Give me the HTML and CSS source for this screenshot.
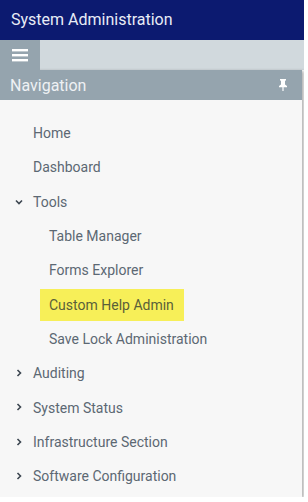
FILE: index.html
```html
<!DOCTYPE html>
<html lang="en">
<head>
  <meta charset="UTF-8" />
  <title>System Administration</title>
  <link rel="stylesheet" href="styles.css">
</head>
<body>

  <div class="topbar">System Administration</div>

  <div class="toolbar">
    <div class="menu-btn">
      <svg width="16" height="14" viewBox="0 0 16 14"><rect x="0" y="1" width="16" height="2.4" fill="#fff"/><rect x="0" y="6" width="16" height="2.4" fill="#fff"/><rect x="0" y="11" width="16" height="2.4" fill="#fff"/></svg>
    </div>
  </div>

  <div class="panel">
    <div class="panel-head">
      <span>Navigation</span>
      <svg class="pin" width="10" height="12" viewBox="0 0 10 12"><path d="M2 0h6v1.2L7 2v3.4l2 1.6v1.2H5.6V12h-1.2V8.2H1V7l2-1.6V2L2 1.2z" fill="#fff"/></svg>
    </div>
    <ul class="nav">
      <li class="item">Home</li>
      <li class="item">Dashboard</li>
      <li class="item"><svg class="chev" width="8" height="8" viewBox="0 0 8 8"><polyline points="1,2.5 4,5.5 7,2.5" fill="none" stroke="#3c4650" stroke-width="1.6"/></svg>Tools</li>
      <li class="item sub">Table Manager</li>
      <li class="item sub">Forms Explorer</li>
      <li class="item sub"><span class="mark">Custom Help Admin</span></li>
      <li class="item sub">Save Lock Administration</li>
      <li class="item"><svg class="chev" width="8" height="8" viewBox="0 0 8 8"><polyline points="2.5,1 5.5,4 2.5,7" fill="none" stroke="#3c4650" stroke-width="1.6"/></svg>Auditing</li>
      <li class="item"><svg class="chev" width="8" height="8" viewBox="0 0 8 8"><polyline points="2.5,1 5.5,4 2.5,7" fill="none" stroke="#3c4650" stroke-width="1.6"/></svg>System Status</li>
      <li class="item"><svg class="chev" width="8" height="8" viewBox="0 0 8 8"><polyline points="2.5,1 5.5,4 2.5,7" fill="none" stroke="#3c4650" stroke-width="1.6"/></svg>Infrastructure Section</li>
      <li class="item"><svg class="chev" width="8" height="8" viewBox="0 0 8 8"><polyline points="2.5,1 5.5,4 2.5,7" fill="none" stroke="#3c4650" stroke-width="1.6"/></svg>Software Configuration</li>
    </ul>
  </div>

</body>
</html>
```

FILE: styles.css
```css
body {
  margin: 0;
  font-family: Roboto, "Liberation Sans", sans-serif;
  background: #ffffff;
  width: 304px;
}
.topbar {
  height: 40px;
  background: #0c1a70;
  color: #e8ecf6;
  font-size: 16px;
  line-height: 40px;
  padding-left: 11px;
}
.toolbar {
  height: 30px;
  background: #d1d9dd;
  display: flex;
}
.menu-btn {
  width: 40px;
  background: #95a4ae;
  display: flex;
  align-items: center;
  justify-content: center;
}
.panel {
  width: 302px;
  height: 427px;
  background: #f7f7f7;
  box-shadow: 2px 1px 3px rgba(0,0,0,0.3);
}
.panel-head {
  height: 30px;
  background: #95a4ae;
  color: #eef1f4;
  font-size: 16px;
  display: flex;
  align-items: center;
  justify-content: space-between;
  padding: 0 14px 0 10px;
}
.nav {
  list-style: none;
  margin: 0;
  padding: 16px 0 0 0;
}
.item {
  height: 34.3px;
  display: flex;
  align-items: center;
  padding-left: 33px;
  font-size: 14px;
  color: #5c6873;
  position: relative;
}
.item.sub {
  padding-left: 49px;
}
.chev {
  position: absolute;
  left: 15px;
  top: 13px;
}
.mark {
  background: #f7ef58;
  color: #5a5f3a;
  padding: 8px 10px 8px 9px;
  margin-left: -9px;
}
```
